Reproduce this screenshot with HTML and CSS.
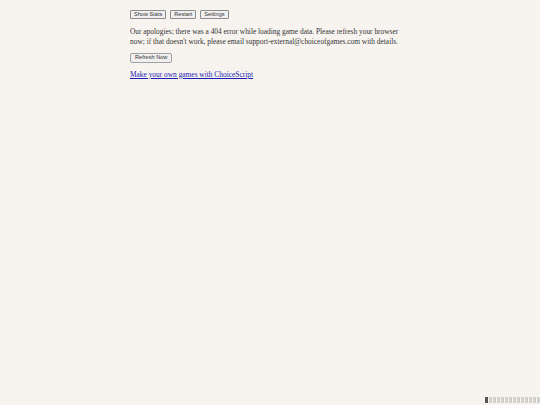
FILE: index.html
```html
<!DOCTYPE html>
<html>
<head>
<meta charset="utf-8">
<link rel="stylesheet" href="styles.css">
</head>
<body>
<div class="container">
  <div class="buttons">
    <button class="btn">Show Stats</button>
    <button class="btn">Restart</button>
    <button class="btn">Settings</button>
  </div>
  <p class="msg">Our apologies; there was a 404 error while loading game data. Please refresh your browser now; if that doesn't work, please email support-external@choiceofgames.com with details.</p>
  <button class="btn refresh">Refresh Now</button>
  <p class="credit"><a href="#">Make your own games with ChoiceScript</a></p>
</div>
<div class="meter">
  <span class="seg dark"></span><span class="seg"></span><span class="seg"></span><span class="seg"></span><span class="seg"></span><span class="seg"></span><span class="seg"></span><span class="seg"></span><span class="seg"></span><span class="seg"></span><span class="seg"></span><span class="seg"></span><span class="seg"></span><span class="seg"></span>
</div>
</body>
</html>
```

FILE: styles.css
```css
html, body {
  margin: 0;
  padding: 0;
  background: #f7f4f0;
  height: 100%;
}
body {
  position: relative;
  font-family: "Liberation Serif", serif;
  font-size: 7.4px;
  color: #333;
}
.container {
  width: 280px;
  margin: 0 auto;
  padding-top: 10px;
}
.buttons {
  display: flex;
  gap: 4px;
}
.btn {
  font-family: "Liberation Sans", Arial, sans-serif;
  font-size: 5.6px;
  color: #333;
  background: #f0f0f0;
  border: 1px solid #8c8c8c;
  border-radius: 1px;
  padding: 0 3px;
  height: 9px;
  line-height: 7px;
  margin: 0;
}
.refresh {
  padding: 0 4px;
  height: 10px;
  border-color: #a0a0a0;
  border-radius: 2px;
}
.msg {
  margin: 8px 0 5px;
  line-height: 10px;
}
.credit {
  margin: 7px 0 0;
  line-height: 10px;
}
.credit a {
  color: #1c1cb0;
}
.meter {
  position: absolute;
  right: 0;
  bottom: 2px;
  display: flex;
  gap: 1px;
}
.seg {
  width: 3px;
  height: 6px;
  background: #d4d2cf;
}
.seg.dark {
  background: #555;
}
```
